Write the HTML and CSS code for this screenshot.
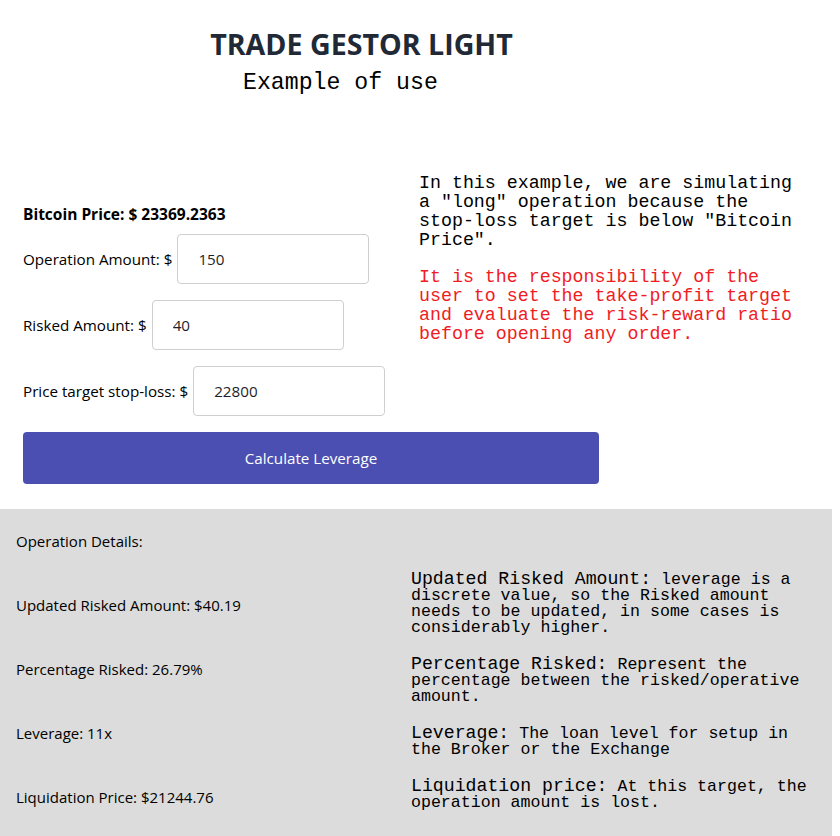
FILE: index.html
```html
<!DOCTYPE html>
<html lang="en">
<head>
<meta charset="utf-8">
<title>Trade Gestor Light</title>
<link rel="stylesheet" href="styles.css">
</head>
<body>
<header class="head">
  <h1 class="title">TRADE GESTOR LIGHT</h1>
  <p class="subtitle">Example of use</p>
</header>

<main class="calc">
  <section class="top">
    <div class="form">
      <p class="price">Bitcoin Price: $ 23369.2363</p>
      <div class="field"><label for="op">Operation Amount: $</label><input id="op" class="input" type="text" value="150"></div>
      <div class="field"><label for="risk">Risked Amount: $</label><input id="risk" class="input" type="text" value="40"></div>
      <div class="field"><label for="sl">Price target stop-loss: $</label><input id="sl" class="input" type="text" value="22800"></div>
    </div>
    <div class="note">
      <p class="note-text">In this example, we are simulating a "long" operation because the stop-loss target is below "Bitcoin Price".</p>
      <p class="note-text warn">It is the responsibility of the user to set the take-profit target and evaluate the risk-reward ratio before opening any order.</p>
    </div>
  </section>
  <button class="btn" type="button">Calculate Leverage</button>
</main>

<section class="details">
  <div class="results">
    <p class="result">Operation Details:</p>
    <p class="result">Updated Risked Amount: $40.19</p>
    <p class="result">Percentage Risked: 26.79%</p>
    <p class="result">Leverage: 11x</p>
    <p class="result">Liquidation Price: $21244.76</p>
  </div>
  <div class="glossary">
    <p class="term"><span class="term-name">Updated Risked Amount:</span> leverage is a discrete value, so the Risked amount needs to be updated, in some cases is considerably higher.</p>
    <p class="term"><span class="term-name">Percentage Risked:</span> Represent the percentage between the risked/operative amount.</p>
    <p class="term"><span class="term-name">Leverage:</span> The loan level for setup in the Broker or the Exchange</p>
    <p class="term"><span class="term-name">Liquidation price:</span> At this target, the operation amount is lost.</p>
  </div>
</section>
</body>
</html>
```
FILE: styles.css
```css
html, body {
  margin: 0;
  padding: 0;
  background: #fff;
}

body {
  font-family: "Open Sans", "Noto Sans", sans-serif;
  color: #000;
  width: 840px;
  height: 836px;
  overflow: hidden;
}

.head {
  width: 723px;
  padding-top: 26px;
}

.title {
  margin: 0;
  text-align: center;
  font-size: 28.6px;
  line-height: 36px;
  font-weight: 700;
  color: #212936;
}

.subtitle {
  margin: 6px 0 0 243px;
  font-family: "Liberation Mono", "DejaVu Sans Mono", monospace;
  font-size: 23.2px;
  line-height: 30px;
  color: #000;
}

.calc {
  padding: 0 0 0 23px;
}

.top {
  display: flex;
  margin-top: 74px;
}

.form {
  width: 396px;
  padding-top: 31px;
}

.price {
  margin: 0 0 9px;
  font-size: 15.5px;
  line-height: 22px;
  font-weight: 700;
}

.field {
  display: flex;
  align-items: center;
  gap: 5px;
  margin-bottom: 16px;
  font-size: 15.2px;
}

.input {
  box-sizing: border-box;
  width: 192px;
  height: 50px;
  padding: 0 20px;
  border: 1px solid #cfcfcf;
  border-radius: 4px;
  font-family: inherit;
  font-size: 15.2px;
  color: #1e1e2a;
  background: #fff;
  outline: none;
}

.note {
  width: 382px;
  padding-top: 2px;
}

.note-text {
  margin: 0 0 18px;
  font-family: "Liberation Mono", "DejaVu Sans Mono", monospace;
  font-size: 18.3px;
  line-height: 19px;
  color: #000;
}

.warn {
  color: #f01c24;
}

.btn {
  display: block;
  width: 576px;
  height: 52px;
  margin: 0;
  border: none;
  border-radius: 4px;
  background: #4b4fb1;
  color: #fff;
  font-family: inherit;
  font-size: 15.2px;
}

.details {
  display: grid;
  grid-template-columns: 395px 405px;
  margin: 25px 8px 0 0;
  padding: 0 16px 7px;
  background: #dcdcdc;
}

.results {
  display: grid;
  grid-auto-rows: 64px;
}

.result {
  margin: 0;
  display: flex;
  align-items: center;
  font-size: 15px;
}

.glossary {
  padding-top: 62px;
}

.term {
  margin: 0 0 20px;
  font-family: "Liberation Mono", "DejaVu Sans Mono", monospace;
  font-size: 16.6px;
  line-height: 16px;
  color: #000;
}

.term-name {
  font-size: 18.2px;
  line-height: 17px;
}
```
